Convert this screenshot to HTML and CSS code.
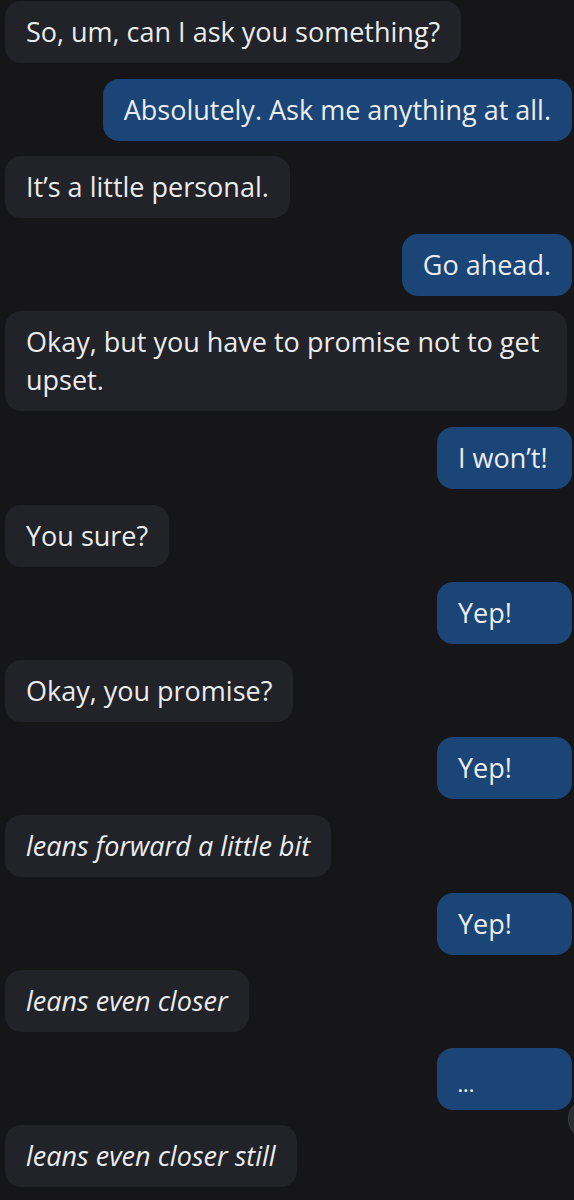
FILE: index.html
```html
<!DOCTYPE html>
<html lang="en">
<head>
    <meta charset="UTF-8">
    <meta name="viewport" content="width=device-width, initial-scale=1.0">
    <title>Chat</title>
    <link rel="stylesheet" href="styles.css">
</head>
<body>
    <div class="page">
        <div class="chat">
            <div class="msg them">So, um, can I ask you something?</div>
            <div class="msg me">Absolutely. Ask me anything at all.</div>
            <div class="msg them">It’s a little personal.</div>
            <div class="msg me">Go ahead.</div>
            <div class="msg them">Okay, but you have to promise not to get upset.</div>
            <div class="msg me">I won’t!</div>
            <div class="msg them">You sure?</div>
            <div class="msg me">Yep!</div>
            <div class="msg them">Okay, you promise?</div>
            <div class="msg me">Yep!</div>
            <div class="msg them action">leans forward a little bit</div>
            <div class="msg me">Yep!</div>
            <div class="msg them action">leans even closer</div>
            <div class="msg me"><span class="dots">...</span></div>
            <div class="msg them action">leans even closer still</div>
        </div>
        <div class="scroll-btn"></div>
    </div>
</body>
</html>
```

FILE: styles.css
```css
html, body {
    overflow: hidden;
}
body {
    margin: 0;
    background-color: #161618;
    font-family: "Open Sans", "Noto Sans", sans-serif;
    color: #eaecee;
}
.page {
    position: relative;
    width: 574px;
    height: 1200px;
    overflow: hidden;
}
.chat {
    display: flex;
    flex-direction: column;
    gap: 15.6px;
    padding: 1px 2px 0 5px;
}
.msg {
    max-width: 520px;
    padding: 12px 21px;
    font-size: 27px;
    line-height: 38px;
    border-radius: 16px;
}
.them {
    align-self: flex-start;
    background-color: #212328;
}
.me {
    align-self: flex-end;
    min-width: 93px;
    background-color: #1b4576;
}
.action {
    font-style: italic;
}
.dots {
    font-size: 16px;
    font-weight: bold;
    line-height: 1;
    letter-spacing: 1px;
    vertical-align: -3px;
}
.scroll-btn {
    position: absolute;
    left: 568px;
    top: 1098px;
    width: 40px;
    height: 40px;
    border-radius: 50%;
    background-color: #2a2c30;
    border: 1px solid #3a3c41;
}
```
